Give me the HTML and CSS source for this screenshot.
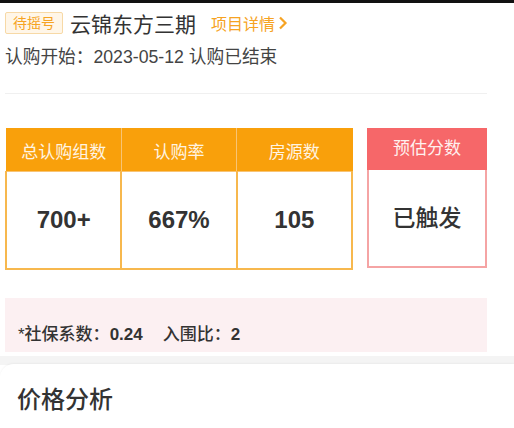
FILE: index.html
```html
<!DOCTYPE html>
<html lang="zh-CN">
<head>
    <meta charset="UTF-8">
    <meta name="viewport" content="width=device-width, initial-scale=1.0">
    <title>云锦东方三期</title>
    <link rel="stylesheet" href="styles.css">
</head>
<body>

<div class="status-bar"></div>

<div class="project">
    <div class="title-row">
        <span class="badge">待摇号</span>
        <span class="name">云锦东方三期</span>
        <a class="detail" href="#">项目详情<svg width="10" height="14" viewBox="0 0 10 14"><path d="M2 1.5 L7.5 7 L2 12.5" fill="none" stroke="#f6a323" stroke-width="2.2"/></svg></a>
    </div>
    <p class="date">认购开始：2023-05-12 认购已结束</p>
    <div class="divider"></div>

    <!-- 统计数据 -->
    <div class="stats">
        <table class="stats-table">
            <tr>
                <th>总认购组数</th>
                <th>认购率</th>
                <th>房源数</th>
            </tr>
            <tr>
                <td>700+</td>
                <td>667%</td>
                <td>105</td>
            </tr>
        </table>
        <div class="score">
            <div class="score-head">预估分数</div>
            <div class="score-body">已触发</div>
        </div>
    </div>

    <div class="ratio">
        <span>*社保系数：</span><b>0.24</b><span class="gap">入围比：</span><b>2</b>
    </div>
</div>

<div class="band"></div>

<div class="card">
    <h2>价格分析</h2>
</div>

</body>
</html>
```

FILE: styles.css
```css
body { margin: 0; background: #fff; font-family: "Liberation Sans", "Noto Sans CJK SC", sans-serif; color: #333; }
.status-bar { height: 3px; background: #111; }
.project { padding: 9px 27px 0 5px; }
.title-row { display: flex; align-items: center; height: 22px; }
.badge { box-sizing: border-box; height: 22px; padding: 0 7px; line-height: 20px; font-size: 14px; color: #f6a323; background: #fff6e8; border: 1px solid #f7d9a6; border-radius: 2px; }
.name { margin-left: 7px; font-size: 21px; color: #333; }
.detail { display: flex; align-items: center; margin-left: 15px; font-size: 16px; color: #f6a323; text-decoration: none; }
.detail svg { margin-left: 3px; }
.date { margin: 12px 0 0; font-size: 17.7px; line-height: 22px; color: #444; }
.divider { height: 1px; margin-top: 25px; background: #f0f0f0; }

.stats { display: flex; gap: 14px; margin-top: 34px; }
.stats-table { width: 348px; border-collapse: collapse; table-layout: fixed; }
.stats-table th { height: 42px; padding: 0; font-size: 17px; font-weight: normal; color: #fff4e2; background: #f9a00b; border: 1px solid #f8c474; border-top-color: #f9a00b; }
.stats-table th:first-child { border-left-color: #f9a00b; }
.stats-table th:last-child { border-right-color: #f9a00b; }
.stats-table td { height: 96px; padding: 0; text-align: center; font-size: 24px; font-weight: bold; color: #333; border: 2px solid #f7b84e; border-top: 0; }

.score { box-sizing: border-box; width: 120px; height: 140px; border: 1px solid #f5a4a4; border-width: 0 2px 2px; }
.score-head { height: 42px; margin: 0 -2px; line-height: 42px; text-align: center; font-size: 17px; color: #fff1ef; background: #f66769; }
.score-body { height: 96px; line-height: 96px; text-align: center; font-size: 23px; font-weight: 500; color: #333; }

.ratio { margin-top: 28px; height: 54px; padding: 22px 0 0 13px; box-sizing: border-box; font-size: 17px; color: #333; background: #fcf0f2; }
.ratio span { font-weight: 500; }
.ratio b { font-size: 17px; font-weight: bold; }
.ratio .gap { margin-left: 20px; }

.band { height: 9px; margin-top: 4px; background: #f4f4f4; }
.card { background: #fff; border-radius: 14px 0 0 0; margin-top: -1px; box-shadow: 0 -1px 2px rgba(0,0,0,0.04); padding: 16px 17px; }
.card h2 { margin: 0; font-size: 24px; font-weight: 500; color: #333; }
```
